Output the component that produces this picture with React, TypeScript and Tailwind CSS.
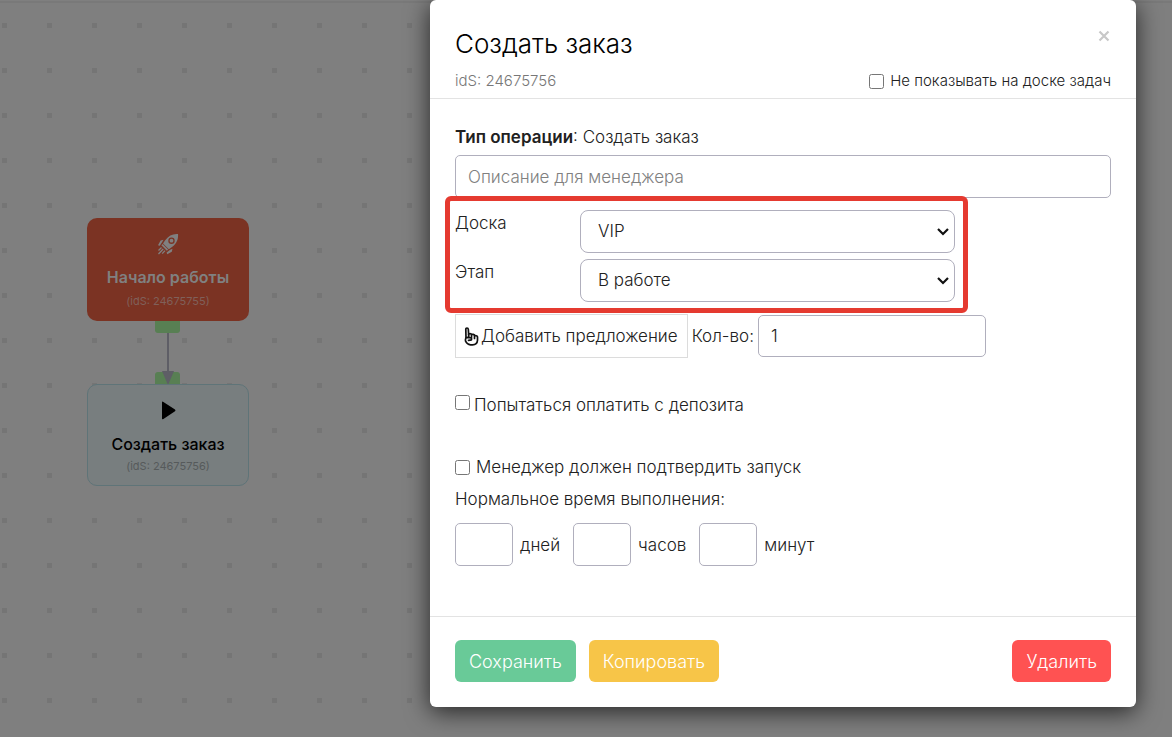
import { useState } from 'react';

const NODE_BASE =
  'absolute left-[87px] flex w-[162px] flex-col items-center rounded-[10px] text-center';

function RocketIcon() {
  return (
    <svg width="22" height="22" viewBox="0 0 22 22" fill="none">
      <path
        fillRule="evenodd"
        fill="currentColor"
        d="M21 1c.5 5-1.300 9.500-6 13l-3.200 2.200-5.800-5.800L8 7.500C11.500 2.500 16 .5 21 1Zm-6.500 3.500a3.200 3.200 0 1 0 0 6.400 3.200 3.200 0 0 0 0-6.400Zm0 1.300a1.900 1.900 0 1 1 0 3.800 1.900 1.900 0 0 1 0-3.800Z"
      />
      <path fill="currentColor" d="M6.500 6.800 3.600 7.500 1 12.200l1.800.5L5 9.300ZM15.500 15.800l-.7 3-4.600 2.400-.6-1.800 3.600-2.600Z" />
      <path stroke="currentColor" strokeWidth="1.800" d="m5 11.600 5.500 5.500" />
      <path stroke="currentColor" strokeWidth="1.300" d="m4.500 14.500-3 3M6.200 16l-4.700 5M8 17.600l-2.800 3" />
    </svg>
  );
}

function HandIcon() {
  return (
    <svg
      width="15"
      height="19"
      viewBox="0 0 15 19"
      fill="none"
      stroke="#111"
      strokeWidth="1.700"
      strokeLinejoin="round"
      strokeLinecap="round"
    >
      <path d="M2 10.500 1.800 2.300Q1.800 1 3 1T4.300 2.300L4.800 10" />
      <path d="M4.600 7.600Q4.600 6.600 6 6.600T7.500 7.600V10.500M7.500 8Q7.800 7 9.200 7.400T10.500 8.500V11.500M10.500 9.200Q11 8.300 12.300 8.700T13.500 10V13.300Q13.200 17.800 8.500 17.800H6.500Q3 17.500 1.500 14V12.200Q1.500 10.500 3.300 10.300L7.500 11V12.800L4.500 13.300" />
    </svg>
  );
}

function FlowCanvas() {
  return (
    <div className="absolute inset-0 overflow-hidden bg-[#7f7f7f]">
      <svg className="absolute inset-0 h-full w-full">
        <defs>
          <pattern id="dots" x="2" y="23" width="45" height="45" patternUnits="userSpaceOnUse">
            <rect width="5" height="5" fill="#757575" />
          </pattern>
        </defs>
        <rect width="100%" height="100%" fill="url(#dots)" />
        <rect y="1" width="100%" height="2" fill="#797979" />
      </svg>

      <div className="absolute left-[155px] top-[321px] h-3 w-[25px] rounded-b-[3px] bg-[#587f53]" />
      <div className="absolute left-[155px] top-[372px] h-3 w-[25px] rounded-t-[3px] bg-[#587f53]" />
      <svg className="absolute left-[161px] top-[333px]" width="14" height="52" viewBox="0 0 14 52">
        <path d="M7 0v40" stroke="#5e5e66" strokeWidth="2" />
        <path d="M1 38h12L7 52Z" fill="#5e5e66" />
      </svg>

      <div className={`${NODE_BASE} top-[218px] h-[103px] bg-[#7b3323] pt-[15px] text-[#808080]`}>
        <RocketIcon />
        <p className="mt-2.5 text-base leading-6 font-semibold">Начало работы</p>
        <p className="mt-1 text-[11px] leading-4 text-[#80605a]">(idS: 24675755)</p>
      </div>

      <div className={`${NODE_BASE} top-[384px] h-[102px] border border-[#5f7478] bg-[#787e7f] pt-4 text-black`}>
        <svg width="16" height="19" viewBox="0 0 16 19" fill="currentColor">
          <path d="M2 1.500Q2 0 3.400 1L15 8.500Q16 9.500 15 10.300L3.400 18Q2 18.700 2 17.500Z" />
        </svg>
        <p className="mt-3 text-base leading-6 font-medium">Создать заказ</p>
        <p className="mt-0.5 text-[11px] leading-4 text-[#565a5b]">(idS: 24675756)</p>
      </div>
    </div>
  );
}

const FIELD = 'rounded-[5px] border border-[#b0afbd] bg-white';

interface SelectRowProps {
  id: string;
  label: string;
  options: string[];
}

function SelectRow({ id, label, options }: SelectRowProps) {
  return (
    <div className="flex items-start">
      <label htmlFor={id} className="w-[125px] shrink-0 leading-[26px]">
        {label}
      </label>
      <div className="relative min-w-0 flex-1">
        <select
          id={id}
          className="block h-[43px] w-full appearance-none rounded-lg border border-[#b0afbd] bg-white pr-8 pl-[17px]"
        >
          {options.map((option) => (
            <option key={option}>{option}</option>
          ))}
        </select>
        <svg
          className="pointer-events-none absolute top-[18px] right-1.5"
          width="12"
          height="8"
          viewBox="0 0 12 8"
          fill="none"
          stroke="#111"
          strokeWidth="2.200"
        >
          <path d="m1 1 5 5 5-5" />
        </svg>
      </div>
    </div>
  );
}

function App() {
  const [quantity, setQuantity] = useState('1');

  return (
    <div className="relative min-h-screen font-['Inter',sans-serif]">
      <FlowCanvas />

      <div className="relative flex min-h-screen items-start justify-end pr-9 pl-4">
        <div
          role="dialog"
          aria-labelledby="dialog-title"
          className="w-full max-w-[706px] rounded-md bg-white text-[17px] font-light text-[#212121] shadow-[0_5px_25px_rgba(0,0,0,0.7)]"
        >
          <header className="border-b border-[#e3e3e3] px-[25px] pt-6 pb-[5px]">
            <div className="flex items-start justify-between">
              <h2 id="dialog-title" className="text-[26px] leading-10 text-black">
                Создать заказ
              </h2>
              <button type="button" aria-label="Закрыть" className="mt-1.5 text-[#c8c8c8]">
                <svg width="14" height="12" viewBox="0 0 14 12" stroke="currentColor" strokeWidth="2.200">
                  <path d="m2.500 1.500 9 9M11.500 1.500l-9 9" />
                </svg>
              </button>
            </div>
            <div className="mt-[5px] flex items-center justify-between text-[15px] leading-6">
              <span className="text-[#777]">idS: 24675756</span>
              <label className="flex items-center gap-1.5">
                <input type="checkbox" className="size-[15px]" />
                Не показывать на доске задач
              </label>
            </div>
          </header>

          <div className="px-[25px] pt-[26px] pb-[50px]">
            <p className="leading-6">
              <b className="font-semibold">Тип операции</b>: Создать заказ
            </p>
            <input
              type="text"
              aria-label="Описание для менеджера"
              placeholder="Описание для менеджера"
              className={`${FIELD} mt-1.5 block h-[43px] w-full px-3 placeholder:text-[#808080]`}
            />

            <div className="relative mt-3 flex max-w-[500px] flex-col gap-1.5">
              <SelectRow id="board" label="Доска" options={['VIP']} />
              <SelectRow id="stage" label="Этап" options={['В работе']} />
              <div className="pointer-events-none absolute -top-3.5 -right-[13px] -bottom-[11px] -left-2.5 rounded-md border-[5px] border-[#e53a30]" />
            </div>

            <div className="mt-3 flex items-center">
              <button
                type="button"
                className="flex h-11 items-center gap-0.5 border border-[#dcdcdc] px-2 pr-[9px]"
              >
                <HandIcon />
                <span className="pt-0.5">Добавить предложение</span>
              </button>
              <label htmlFor="quantity" className="mx-1 pt-0.5">
                Кол-во:
              </label>
              <input
                id="quantity"
                type="text"
                value={quantity}
                onChange={(e) => setQuantity(e.target.value)}
                className={`${FIELD} h-[42px] w-[228px] px-3`}
              />
            </div>

            <label className="mt-[35px] flex items-start gap-1 leading-6">
              <input type="checkbox" className="mt-0.5 size-[15px]" />
              Попытаться оплатить с депозита
            </label>
            <label className="mt-[38px] flex items-center gap-1.5 leading-6">
              <input type="checkbox" className="size-[15px]" />
              Менеджер должен подтвердить запуск
            </label>

            <p className="mt-2 leading-6">Нормальное время выполнения:</p>
            <div className="mt-3 flex items-center gap-[13px]">
              {['дней', 'часов', 'минут'].map((unit) => (
                <label key={unit} className="flex items-center gap-[7px]">
                  <input type="text" className={`${FIELD} h-[43px] w-[58px] px-3`} />
                  <span className="pt-0.5">{unit}</span>
                </label>
              ))}
            </div>
          </div>

          <footer className="flex border-t border-[#e3e3e3] px-[25px] pt-[23px] pb-[25px] text-lg text-white">
            <button type="button" className="h-[42px] rounded-md bg-[#69ca98] px-3.5 pt-0.5">
              Сохранить
            </button>
            <button type="button" className="ml-[13px] h-[42px] rounded-md bg-[#f7c548] px-3.5 pt-0.5">
              Копировать
            </button>
            <button type="button" className="ml-auto h-[42px] rounded-md bg-[#ff5252] px-3.5 pt-0.5">
              Удалить
            </button>
          </footer>
        </div>
      </div>
    </div>
  );
}

export default App;
